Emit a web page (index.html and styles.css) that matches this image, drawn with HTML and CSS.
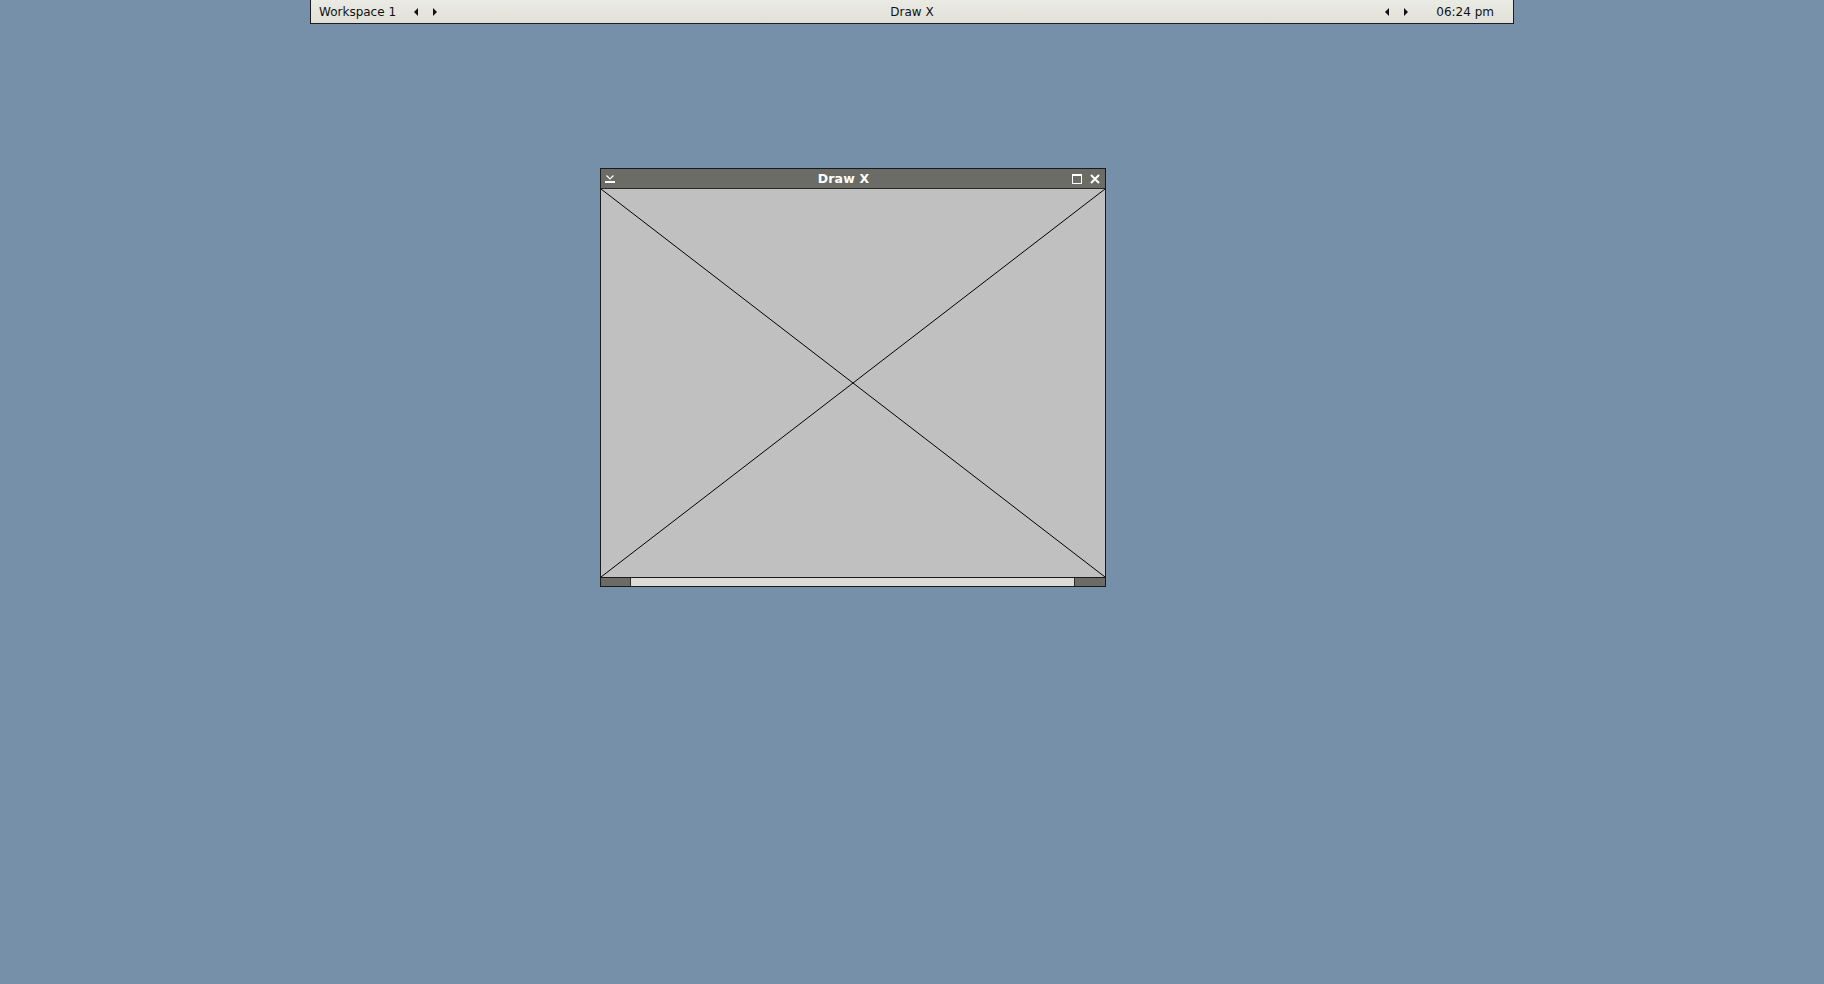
FILE: index.html
```html
<!DOCTYPE html>
<html>
<head>
<meta charset="utf-8">
<title>Desktop</title>
<link rel="stylesheet" href="styles.css">
</head>
<body>
<div class="desktop">
  <div class="toolbar">
    <div class="tb-left">
      <span class="workspace">Workspace 1</span>
      <span class="tb-btn"><span class="tri tri-left"></span></span>
      <span class="tb-btn"><span class="tri tri-right"></span></span>
    </div>
    <div class="tb-title">Draw X</div>
    <div class="tb-right">
      <span class="tb-btn"><span class="tri tri-left"></span></span>
      <span class="tb-btn"><span class="tri tri-right"></span></span>
      <span class="clock">06:24 pm</span>
    </div>
  </div>

  <div class="window">
    <div class="titlebar">
      <span class="wbtn">
        <svg width="10" height="10" viewBox="0 0 10 10"><path d="M1.5 1.5 L5 5 L8.5 1.5" fill="none" stroke="#fff" stroke-width="1.2"/><rect x="0" y="7" width="10" height="2" fill="#fff"/></svg>
      </span>
      <span class="wtitle">Draw X</span>
      <span class="wbtn">
        <svg width="10" height="10" viewBox="0 0 10 10"><rect x="0.5" y="0.5" width="9" height="9" fill="none" stroke="#fff" stroke-width="1"/><rect x="0" y="0" width="10" height="2" fill="#fff"/></svg>
      </span>
      <span class="wbtn wbtn-last">
        <svg width="10" height="10" viewBox="0 0 10 10"><path d="M1 1 L9 9 M9 1 L1 9" stroke="#fff" stroke-width="2"/></svg>
      </span>
    </div>
    <div class="canvas">
      <svg class="cross" viewBox="0 0 100 100" preserveAspectRatio="none">
        <line x1="0" y1="0" x2="100" y2="100" stroke="#000" stroke-width="1" vector-effect="non-scaling-stroke"/>
        <line x1="100" y1="0" x2="0" y2="100" stroke="#000" stroke-width="1" vector-effect="non-scaling-stroke"/>
      </svg>
    </div>
    <div class="handle">
      <span class="grip"></span>
      <span class="handle-mid"></span>
      <span class="grip grip-right"></span>
    </div>
  </div>
</div>
</body>
</html>
```

FILE: styles.css
```css
html, body {
  margin: 0;
  padding: 0;
  width: 100%;
  height: 100%;
}
body {
  background: #7690aa;
  font-family: "DejaVu Sans", "Liberation Sans", sans-serif;
  overflow: hidden;
}
.desktop {
  position: relative;
  width: 1824px;
  height: 984px;
}
.toolbar {
  width: 1202px;
  height: 22px;
  padding-top: 1px;
  margin: 0 auto;
  box-sizing: content-box;
  border: 1px solid #1c1c1c;
  border-top: none;
  background: linear-gradient(#ebebe5, #e0e0d9);
  display: grid;
  grid-template-columns: 1fr auto 1fr;
  align-items: center;
  font-size: 12px;
  color: #111;
}
.tb-left {
  display: flex;
  align-items: center;
  padding-left: 8px;
}
.tb-right {
  display: flex;
  align-items: center;
  justify-content: flex-end;
  padding-right: 19px;
}
.workspace {
  margin-right: 10px;
}
.tb-btn {
  width: 19px;
  height: 22px;
  display: flex;
  align-items: center;
  justify-content: center;
}
.tri {
  width: 0;
  height: 0;
  border-top: 4px solid transparent;
  border-bottom: 4px solid transparent;
}
.tri-left {
  border-right: 4px solid #111;
}
.tri-right {
  border-left: 4px solid #111;
}
.clock {
  margin-left: 21px;
}
.tb-title {
  text-align: center;
}
.window {
  position: absolute;
  left: 600px;
  top: 168px;
  width: 504px;
  height: 417px;
  border: 1px solid #1a1a1a;
  display: flex;
  flex-direction: column;
  background: #c0c0c0;
}
.titlebar {
  height: 19px;
  border-bottom: 1px solid #2a2a2a;
  background: #6c6c66;
  display: flex;
  align-items: center;
  padding: 0;
  flex-shrink: 0;
}
.wbtn {
  width: 18px;
  height: 18px;
  display: flex;
  align-items: center;
  justify-content: center;
}
.wbtn-last {
  margin-right: 1px;
}
.wtitle {
  flex: 1;
  text-align: center;
  color: #fff;
  font-weight: bold;
  font-size: 12.5px;
  letter-spacing: 0.2px;
}
.canvas {
  flex: 1;
  position: relative;
  background: #c0c0c0;
}
.cross {
  position: absolute;
  inset: 0;
  width: 100%;
  height: 100%;
  display: block;
}
.handle {
  height: 8px;
  border-top: 1px solid #1a1a1a;
  display: flex;
  flex-shrink: 0;
  background: #dcdcd6;
}
.grip {
  width: 29px;
  background: #6c6c66;
  border-right: 1px solid #2a2a2a;
}
.grip-right {
  width: 30px;
  border-right: none;
  border-left: 1px solid #2a2a2a;
}
.handle-mid {
  flex: 1;
}
```
